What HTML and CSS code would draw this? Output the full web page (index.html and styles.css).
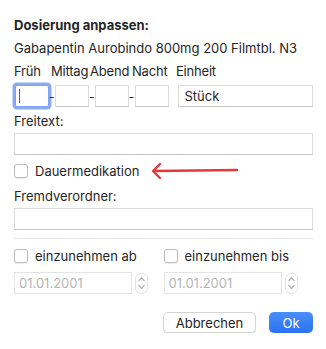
FILE: index.html
```html
<!DOCTYPE html>
<html lang="de">
<head>
    <meta charset="UTF-8">
    <title>Dosierung anpassen</title>
    <link rel="stylesheet" href="styles.css">
</head>
<body>
  <div class="dialog">
    <h1 class="title">Dosierung anpassen:</h1>
    <p class="product">Gabapentin Aurobindo 800mg 200 Filmtbl. N3</p>

    <div class="dose-labels">
      <span class="lbl-frueh">Früh</span>
      <span class="lbl-mittag">Mittag</span>
      <span class="lbl-abend">Abend</span>
      <span class="lbl-nacht">Nacht</span>
      <span class="lbl-einheit">Einheit</span>
    </div>
    <div class="dose-row">
      <div class="field small focus"><span class="caret"></span></div>
      <span class="dash">-</span>
      <div class="field small"></div>
      <span class="dash">-</span>
      <div class="field small"></div>
      <span class="dash">-</span>
      <div class="field small"></div>
      <div class="field unit">Stück</div>
    </div>

    <div class="label">Freitext:</div>
    <div class="field wide"></div>

    <div class="check-row">
      <span class="checkbox"></span>
      <span>Dauermedikation</span>
      <svg class="arrow" width="90" height="18" viewBox="0 0 90 18">
        <path d="M3 9 L86 8" stroke="#e5383c" stroke-width="2.4" stroke-linecap="round" fill="none"/>
        <path d="M9 2 L2 9 L9 16" stroke="#e5383c" stroke-width="2.4" stroke-linecap="round" stroke-linejoin="round" fill="none"/>
      </svg>
    </div>

    <div class="label">Fremdverordner:</div>
    <div class="field wide"></div>

    <hr class="sep">

    <div class="range">
      <div class="range-col">
        <div class="check-row tight">
          <span class="checkbox"></span>
          <span>einzunehmen ab</span>
        </div>
        <div class="date-row">
          <div class="field date">01.01.2001</div>
          <div class="stepper">
            <svg width="9" height="6" viewBox="0 0 9 6"><path d="M1.5 5 L4.5 1.5 L7.5 5" stroke="#b4b4b4" stroke-width="1.2" fill="none"/></svg>
            <svg width="9" height="6" viewBox="0 0 9 6"><path d="M1.5 1 L4.5 4.5 L7.5 1" stroke="#b4b4b4" stroke-width="1.2" fill="none"/></svg>
          </div>
        </div>
      </div>
      <div class="range-col">
        <div class="check-row tight">
          <span class="checkbox"></span>
          <span>einzunehmen bis</span>
        </div>
        <div class="date-row">
          <div class="field date">01.01.2001</div>
          <div class="stepper">
            <svg width="9" height="6" viewBox="0 0 9 6"><path d="M1.5 5 L4.5 1.5 L7.5 5" stroke="#b4b4b4" stroke-width="1.2" fill="none"/></svg>
            <svg width="9" height="6" viewBox="0 0 9 6"><path d="M1.5 1 L4.5 4.5 L7.5 1" stroke="#b4b4b4" stroke-width="1.2" fill="none"/></svg>
          </div>
        </div>
      </div>
    </div>

    <div class="buttons">
      <button class="btn">Abbrechen</button>
      <button class="btn primary">Ok</button>
    </div>
  </div>
</body>
</html>
```

FILE: styles.css
```css
*{
    margin: 0;
    padding: 0;
    box-sizing: border-box;
}
body{
    background-color: #fff;
    font-family: "Inter", "Liberation Sans", sans-serif;
    font-size: 13px;
    color: #262626;
}
.dialog{
    padding: 13px 13px 0 14px;
    width: 326px;
}
.title{
    font-size: 13px;
    font-weight: 700;
    line-height: 24px;
}
.product{
    line-height: 23px;
}
.dose-labels{
    display: flex;
    line-height: 23px;
    white-space: nowrap;
    letter-spacing: -0.2px;
}
.lbl-frueh{ width: 37px; }
.lbl-mittag{ width: 39px; }
.lbl-abend{ width: 42px; }
.lbl-nacht{ width: 44px; }
.dose-row{
    display: flex;
    align-items: center;
    margin-top: 2px;
    height: 22px;
}
.field{
    height: 22px;
    border: 1px solid #dcdcdc;
    border-bottom-color: #c6c6c6;
    background: #fff;
    line-height: 20px;
    padding: 0 6px;
}
.field.small{
    width: 34px;
}
.field.focus{
    margin-left: 1px;
    border-color: #7fa2ee;
    box-shadow: 0 0 0 2.5px #8eaaf1;
    border-radius: 2px;
    padding: 0 3px;
    display: flex;
    align-items: center;
}
.caret{
    width: 1px;
    height: 14px;
    background: #2a60e8;
}
.dash{
    width: 6px;
    text-align: center;
    font-size: 12px;
}
.field.unit{
    margin-left: 9px;
    width: 136px;
    font-size: 13px;
}
.label{
    margin-top: 3px;
    line-height: 22px;
}
.field.wide{
    margin-top: 1px;
    width: 299px;
}
.check-row{
    display: flex;
    align-items: center;
    height: 22px;
    margin-top: 5px;
    white-space: nowrap;
}
.check-row.tight{
    margin-top: 0;
}
.checkbox{
    width: 14px;
    height: 14px;
    border: 1px solid #bdbdbd;
    border-radius: 3px;
    background: #fff;
    margin-right: 7px;
    box-shadow: 0 0.5px 1px rgba(0,0,0,0.08);
}
.arrow{
    margin-left: 12px;
}
.sep{
    margin-top: 8px;
    border: none;
    border-top: 1px solid #e3e3e3;
    width: 299px;
}
.range{
    display: flex;
    margin-top: 6px;
}
.range-col{
    width: 153px;
}
.date-row{
    display: flex;
    align-items: center;
    margin-top: 5px;
}
.field.date{
    width: 118px;
    color: #b5b5b5;
    border-color: #e4e4e4;
    padding: 0 4px;
}
.stepper{
    margin-left: 3px;
    width: 13px;
    height: 21px;
    border: 1px solid #e2e2e2;
    border-radius: 6px;
    display: flex;
    flex-direction: column;
    align-items: center;
    justify-content: center;
    gap: 2px;
}
.buttons{
    display: flex;
    justify-content: flex-end;
    gap: 13px;
    margin-top: 18px;
}
.btn{
    font-family: inherit;
    font-size: 13px;
    height: 21px;
    border-radius: 5px;
    border: 1px solid #d4d4d4;
    background: #fff;
    color: #222;
    width: 93px;
    box-shadow: 0 1px 1px rgba(0,0,0,0.12);
}
.btn.primary{
    width: 44px;
    border: none;
    color: #fff;
    background: linear-gradient(#4a8ff8, #2a72f3);
}
```
